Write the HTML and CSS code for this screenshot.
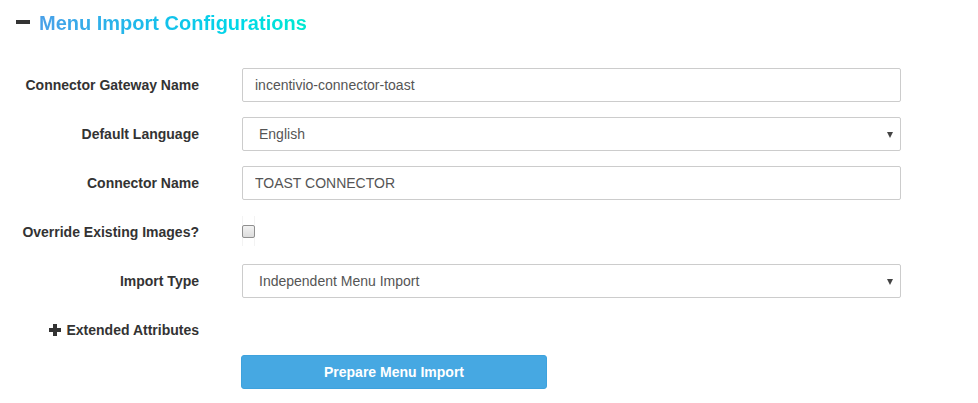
FILE: index.html
```html
<!DOCTYPE html>
<html>
<head>
<meta charset="utf-8">
<link rel="stylesheet" href="styles.css">
</head>
<body>
<div class="page">
  <h2 class="title"><span class="minus"></span><span class="title-text">Menu Import Configurations</span></h2>
  <form class="form">
    <div class="row">
      <label class="label">Connector Gateway Name</label>
      <div class="field"><input class="control" type="text" value="incentivio-connector-toast"></div>
    </div>
    <div class="row">
      <label class="label">Default Language</label>
      <div class="field select-wrap"><div class="control select">English</div><span class="caret"></span></div>
    </div>
    <div class="row">
      <label class="label">Connector Name</label>
      <div class="field"><input class="control" type="text" value="TOAST CONNECTOR"></div>
    </div>
    <div class="row">
      <label class="label">Override Existing Images?</label>
      <div class="field"><div class="check-wrap"><span class="checkbox"></span></div></div>
    </div>
    <div class="row">
      <label class="label">Import Type</label>
      <div class="field select-wrap"><div class="control select">Independent Menu Import</div><span class="caret"></span></div>
    </div>
    <div class="row">
      <label class="label ext"><span class="plus"></span>Extended Attributes</label>
      <div class="field"></div>
    </div>
    <div class="row btn-row">
      <div class="label"></div>
      <div class="field"><button type="button" class="btn">Prepare Menu Import</button></div>
    </div>
  </form>
</div>
</body>
</html>
```
FILE: styles.css
```css
* { box-sizing: border-box; }
html, body { margin: 0; padding: 0; background: #fff; }
body { font-family: "Liberation Sans", Arial, sans-serif; font-size: 14px; color: #333; }
.page { padding: 10px 0 0 16px; }
.title { margin: 0; height: 26px; display: flex; align-items: center; font-size: 20px; font-weight: bold; line-height: 26px; }
.minus { width: 14px; height: 4px; background: #333; margin-right: 9px; margin-top: -3px; }
.title-text {
  background: linear-gradient(90deg, #4aa0e8 0%, #15bfeb 45%, #00d8e8 75%, #00e8d0 100%);
  -webkit-background-clip: text; background-clip: text; color: transparent;
}
.form { margin-top: 32px; display: flex; flex-direction: column; }
.row { display: grid; grid-template-columns: 226px 659px; margin-bottom: 15px; min-height: 34px; align-items: center; }
.label { text-align: right; padding-right: 43px; font-weight: bold; font-size: 14px; color: #333; }
.ext { display: flex; justify-content: flex-end; align-items: center; }
.plus { position: relative; width: 12px; height: 12px; margin-right: 6px; }
.plus::before, .plus::after { content: ""; position: absolute; background: #333; }
.plus::before { left: 0; top: 4px; width: 12px; height: 4px; }
.plus::after { left: 4px; top: 0; width: 4px; height: 12px; }
.field { position: relative; }
.control { display: block; width: 100%; height: 34px; border: 1px solid #ccc; border-radius: 2px; padding: 0 12px; font-family: "Liberation Sans", Arial, sans-serif; font-size: 14px; color: #555; background: #fff; line-height: 32px; outline: none; }
.select { padding-left: 16px; }
.caret { position: absolute; right: 8px; top: 15px; width: 0; height: 0; border-left: 3.5px solid transparent; border-right: 3.5px solid transparent; border-top: 6px solid #444; }
.check-wrap { width: 13px; height: 30px; margin-top: -2px; display: flex; align-items: center; justify-content: center; border-left: 1px solid #f3f3f3; border-right: 1px solid #f3f3f3; }
.checkbox { width: 13px; height: 13px; border: 1px solid #8f8f8f; border-radius: 2px; background: linear-gradient(#f2f2f2, #dcdcdc); flex: none; }
.row.btn-row { margin-top: -7px; }
.btn { width: 306px; height: 34px; margin-left: -1px; background: #46a8e2; border: 1px solid #3ea2dd; border-radius: 3px; color: #fff; font-family: "Liberation Sans", Arial, sans-serif; font-weight: bold; font-size: 14px; }
```
